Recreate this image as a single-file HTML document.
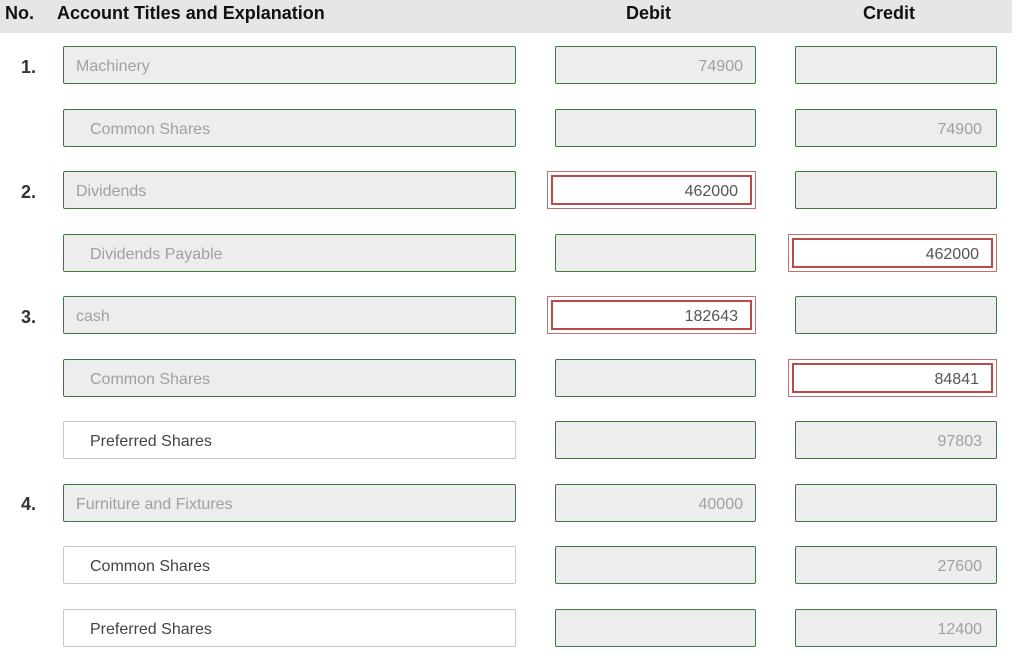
<!DOCTYPE html>
<html><head><style>
body{margin:0;width:1024px;height:664px;background:#fff;font-family:"Liberation Sans",sans-serif;position:relative;overflow:hidden}
.hd{position:absolute;left:0;top:0;width:1012px;height:33px;background:#e6e6e6}
.h{position:absolute;top:3px;font-weight:bold;font-size:18px;color:#111}
.n{position:absolute;left:21px;font-weight:bold;font-size:18px;color:#333}
.b{position:absolute;box-sizing:border-box;height:38px;border:1px solid #3e7a3e;border-radius:2px;background:#ededed;font-size:16px;color:#a0a0a0;line-height:39px}
.w{background:#fff;border-color:#c8c8c8;color:#444}
.a{left:63px;width:453px;padding-left:12px}
.a.i{padding-left:26px}
.d{left:555px;width:201px;text-align:right;padding-right:12px}
.c{left:795px;width:202px;text-align:right;padding-right:14px}
.r{position:absolute;box-sizing:border-box;height:38px;width:209px;border:1px solid #c07070;padding:3px}
.r div{box-sizing:border-box;height:30px;border:2px solid #b84a4a;background:#fff;text-align:right;padding-right:12px;line-height:29px;font-size:16px;color:#555}
</style></head><body>
<div class="hd"></div>
<div class="h" style="left:5px">No.</div>
<div class="h" style="left:57px">Account Titles and Explanation</div>
<div class="h" style="left:626px">Debit</div>
<div class="h" style="left:863px">Credit</div>

<div class="n" style="top:57px">1.</div>
<div class="b a" style="top:46px">Machinery</div>
<div class="b d" style="top:46px">74900</div>
<div class="b c" style="top:46px"></div>

<div class="b a i" style="top:109px">Common Shares</div>
<div class="b d" style="top:109px"></div>
<div class="b c" style="top:109px">74900</div>

<div class="n" style="top:182px">2.</div>
<div class="b a" style="top:171px">Dividends</div>
<div class="r" style="left:547px;top:171px"><div>462000</div></div>
<div class="b c" style="top:171px"></div>

<div class="b a i" style="top:234px">Dividends Payable</div>
<div class="b d" style="top:234px"></div>
<div class="r" style="left:788px;top:234px"><div>462000</div></div>

<div class="n" style="top:307px">3.</div>
<div class="b a" style="top:296px">cash</div>
<div class="r" style="left:547px;top:296px"><div>182643</div></div>
<div class="b c" style="top:296px"></div>

<div class="b a i" style="top:359px">Common Shares</div>
<div class="b d" style="top:359px"></div>
<div class="r" style="left:788px;top:359px"><div>84841</div></div>

<div class="b a i w" style="top:421px">Preferred Shares</div>
<div class="b d" style="top:421px"></div>
<div class="b c" style="top:421px">97803</div>

<div class="n" style="top:494px">4.</div>
<div class="b a" style="top:484px">Furniture and Fixtures</div>
<div class="b d" style="top:484px">40000</div>
<div class="b c" style="top:484px"></div>

<div class="b a i w" style="top:546px">Common Shares</div>
<div class="b d" style="top:546px"></div>
<div class="b c" style="top:546px">27600</div>

<div class="b a i w" style="top:609px">Preferred Shares</div>
<div class="b d" style="top:609px"></div>
<div class="b c" style="top:609px">12400</div>
</body></html>
